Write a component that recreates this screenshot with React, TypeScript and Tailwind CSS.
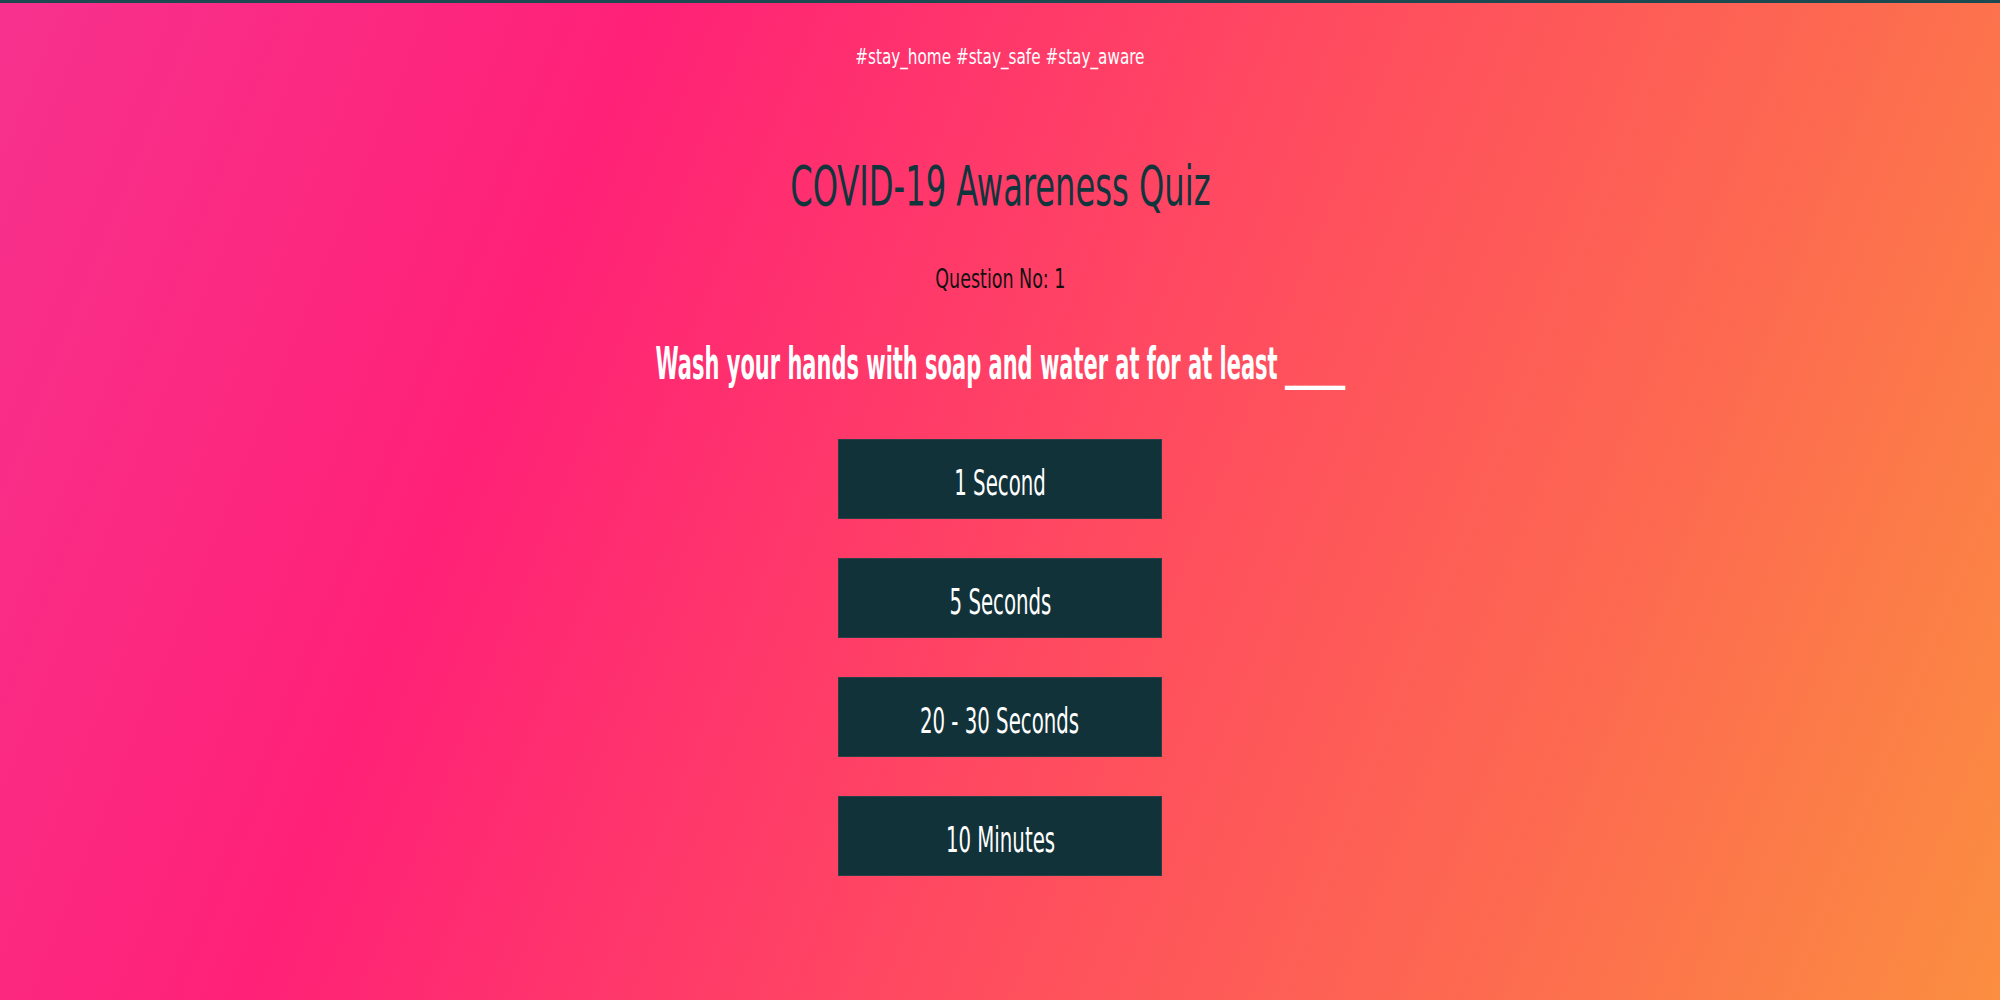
import React from "react";

const font = { fontFamily: '"DejaVu Sans Condensed", "Liberation Sans Narrow", "Liberation Sans", sans-serif' };

const options: { label: string }[] = [
  { label: "1 Second" },
  { label: "5 Seconds" },
  { label: "20 - 30 Seconds" },
  { label: "10 Minutes" },
];

export default function App() {
  return (
    <div
      className="w-[2000px] h-[1000px] border-t-[3px] border-[#1d4a50] bg-[linear-gradient(112deg,#f7328e_0%,#ff2177_27%,#ff4a60_55%,#fd6a50_78%,#fb8e40_100%)] flex flex-col items-center overflow-hidden"
      style={font}
    >
      <div className="mt-[43px] text-[22px] leading-none text-white scale-x-[0.77] whitespace-nowrap">
        #stay_home #stay_safe #stay_aware
      </div>
      <h1 className="mt-[91px] text-[55px] leading-none text-[#10353c] scale-x-[0.65] whitespace-nowrap">
        COVID-19 Awareness Quiz
      </h1>
      <div className="mt-[51px] text-[27px] leading-none text-[#111111] scale-x-[0.72] whitespace-nowrap">
        Question No: 1
      </div>
      <div className="mt-[50px] text-[44px] leading-none font-bold text-white scale-x-[0.53] whitespace-nowrap">
        Wash your hands with soap and water at for at least <span className="tracking-[-1px]">______</span>
      </div>
      <div className="mt-[53px] flex flex-col gap-[39px]">
        {options.map((o) => (
          <button
            key={o.label}
            className="w-[324px] h-[80px] pt-[8px] bg-[#12323a] border border-[#2a3f45] text-white flex items-center justify-center"
            style={font}
          >
            <span className="text-[36px] leading-none scale-x-[0.61] whitespace-nowrap">{o.label}</span>
          </button>
        ))}
      </div>
    </div>
  );
}
